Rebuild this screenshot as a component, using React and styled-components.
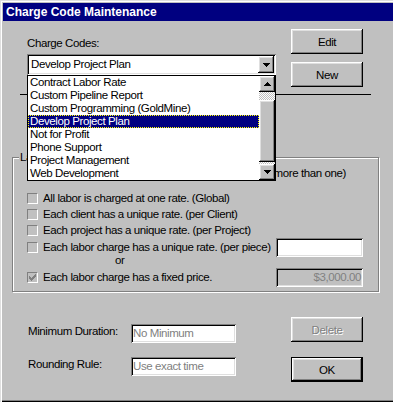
import styled, { createGlobalStyle } from "styled-components";

const GlobalStyle = createGlobalStyle`
  html, body {
    margin: 0;
    padding: 0;
    background: #c0c0c0;
  }
  body {
    font-family: "Liberation Sans", Arial, sans-serif;
    font-size: 11.5px;
    letter-spacing: -0.4px;
    color: #000;
  }
`;

const raised = `
  background: #c0c0c0;
  box-shadow: inset -1px -1px #000, inset 1px 1px #fff,
    inset -2px -2px #808080, inset 2px 2px #dfdfdf;
`;

const sunken = `
  box-shadow: inset 1px 1px #808080, inset -1px -1px #fff,
    inset 2px 2px #000, inset -2px -2px #dfdfdf;
`;

const Window = styled.div`
  width: 393px;
  height: 402px;
  box-sizing: border-box;
  padding: 3px 0 0 3px;
  background: #c0c0c0;
  box-shadow: inset 1px 1px #dfdfdf, inset 2px 2px #fff,
    inset 0 -1px #000, inset 0 -2px #808080;
  overflow: hidden;
`;

const TitleBar = styled.div`
  height: 18px;
  line-height: 18px;
  padding-left: 3px;
  background: #000080;
  color: #fff;
  font-size: 12px;
  font-weight: bold;
  letter-spacing: 0;
  white-space: nowrap;
`;

const Body = styled.div`
  padding: 8px 14px 0 9px;
`;

const TopRow = styled.div`
  display: flex;
  justify-content: space-between;
  padding: 0 16px 0 15px;
`;

const ComboColumn = styled.div`
  position: relative;
  width: 249px;
  padding-top: 8px;
`;

const Label = styled.div`
  line-height: 13px;
  white-space: nowrap;
`;

const ComboLabel = styled(Label)`
  margin-bottom: 4px;
`;

const Combo = styled.div`
  display: flex;
  align-items: center;
  height: 21px;
  box-sizing: border-box;
  padding: 2px;
  background: #fff;
  ${sunken}
`;

const ComboText = styled.div`
  flex: 1;
  padding-left: 2px;
  line-height: 17px;
  white-space: nowrap;
`;

const ArrowButton = styled.div`
  width: 16px;
  height: ${(p) => p.$h || 16}px;
  flex: none;
  display: flex;
  align-items: center;
  justify-content: center;
  ${raised}
`;

const DropList = styled.div`
  position: absolute;
  left: 0;
  top: 46px;
  width: 249px;
  height: 106px;
  box-sizing: border-box;
  border: 1px solid #000;
  background: #fff;
  display: flex;
  z-index: 10;
`;

const Items = styled.div`
  flex: 1;
  min-width: 0;
`;

const Item = styled.div`
  height: 13px;
  line-height: 13px;
  padding-left: 2px;
  white-space: nowrap;
  background: ${(p) => (p.$selected ? "#000080" : "transparent")};
  color: ${(p) => (p.$selected ? "#fff" : "#000")};
  outline: ${(p) => (p.$selected ? "1px dotted #ffff00" : "none")};
  outline-offset: -1px;
`;

const ScrollBar = styled.div`
  width: 16px;
  display: flex;
  flex-direction: column;
`;

const Track = styled.div`
  flex: 1;
  background: repeating-conic-gradient(#c0c0c0 0 25%, #fff 0 50%) 0 0 / 2px 2px;
`;

const Thumb = styled.div`
  margin-top: 8px;
  height: 62px;
  ${raised}
`;

const ButtonColumn = styled.div`
  display: flex;
  flex-direction: column;
  gap: ${(p) => p.$gap}px;
`;

const Button = styled.div`
  width: 72px;
  height: 25px;
  box-sizing: border-box;
  display: flex;
  align-items: center;
  justify-content: center;
  ${raised}
  border: ${(p) => (p.$default ? "1px solid #000" : "none")};
  color: ${(p) => (p.$disabled ? "#808080" : "#000")};
  text-shadow: ${(p) => (p.$disabled ? "1px 1px #fff" : "none")};
`;

const Divider = styled.div`
  height: 1px;
  margin: 7px 8px 0;
  background: #000;
`;

const Group = styled.fieldset`
  margin: 56px 0 0;
  padding: 3px 14px 4px;
  min-width: 0;
  border: 1px solid #808080;
  box-shadow: inset 1px 1px #fff, 1px 1px #fff;
`;

const Legend = styled.legend`
  margin-left: -8px;
  padding: 0 1px;
  line-height: 13px;
  background: #c0c0c0;
`;

const GroupNote = styled(Label)`
  text-align: right;
  padding-right: 18px;
  margin-bottom: 10px;
`;

const CheckRow = styled.div`
  display: grid;
  grid-template-columns: 249px 87px;
  align-items: center;
  height: ${(p) => p.$h}px;
`;

const CheckLabel = styled.div`
  display: flex;
  align-items: center;
  gap: 5px;
  line-height: 13px;
  white-space: nowrap;
`;

const Box = styled.div`
  width: 11px;
  height: 11px;
  box-sizing: border-box;
  flex: none;
  border-style: solid;
  border-width: 1px;
  border-color: #808080 #fff #fff #808080;
  display: flex;
  align-items: center;
  justify-content: center;
`;

const OrRow = styled.div`
  margin-top: -3px;
  height: 14px;
  line-height: 13px;
  padding-left: 88px;
`;

const TextBox = styled.div`
  width: ${(p) => p.$w}px;
  height: 19px;
  box-sizing: border-box;
  padding: 2px;
  line-height: 15px;
  white-space: nowrap;
  overflow: hidden;
  background: ${(p) => (p.$gray ? "#c0c0c0" : "#fff")};
  color: ${(p) => (p.$dim ? "#808080" : "#000")};
  text-align: ${(p) => (p.$right ? "right" : "left")};
  ${sunken}
`;

const BottomArea = styled.div`
  display: flex;
  justify-content: space-between;
  margin-top: 25px;
  padding: 0 16px;
`;

const FieldColumn = styled.div`
  display: flex;
  flex-direction: column;
  gap: 14px;
  padding-top: 7px;
`;

const FieldRow = styled.div`
  display: flex;
  align-items: flex-start;
`;

const FieldLabel = styled(Label)`
  width: 103px;
  padding-top: 1px;
`;

const Arrow = ({ up, color = "#000" }) => {
  const rows = up ? [1, 3, 5, 7] : [7, 5, 3, 1];
  return (
    <svg width="7" height="4" viewBox="0 0 7 4" shapeRendering="crispEdges">
      {rows.map((w, i) => (
        <rect key={i} x={(7 - w) / 2} y={i} width={w} height="1" fill={color} />
      ))}
    </svg>
  );
};

const CHECK = [
  "......#",
  ".....##",
  "#...###",
  "##.###.",
  "#####..",
  ".###...",
  "..#....",
];

const CheckMark = ({ color = "#808080" }) => (
  <svg width="7" height="7" viewBox="0 0 7 7" shapeRendering="crispEdges">
    {CHECK.flatMap((row, y) =>
      row.split("").map((c, x) =>
        c === "#" ? <rect key={`${x}-${y}`} x={x} y={y} width="1" height="1" fill={color} /> : null
      )
    )}
  </svg>
);

const codes = [
  "Contract Labor Rate",
  "Custom Pipeline Report",
  "Custom Programming (GoldMine)",
  "Develop Project Plan",
  "Not for Profit",
  "Phone Support",
  "Project Management",
  "Web Development",
];

const Check = ({ checked, children }) => (
  <CheckLabel>
    <Box>{checked && <CheckMark />}</Box>
    <span>{children}</span>
  </CheckLabel>
);

export default function App() {
  return (
    <>
      <GlobalStyle />
      <Window>
        <TitleBar>Charge Code Maintenance</TitleBar>
        <Body>
          <TopRow>
            <ComboColumn>
              <ComboLabel>Charge Codes:</ComboLabel>
              <Combo>
                <ComboText>Develop Project Plan</ComboText>
                <ArrowButton $h={17}>
                  <Arrow />
                </ArrowButton>
              </Combo>
              <DropList>
                <Items>
                  {codes.map((c) => (
                    <Item key={c} $selected={c === "Develop Project Plan"}>
                      {c}
                    </Item>
                  ))}
                </Items>
                <ScrollBar>
                  <ArrowButton>
                    <Arrow up />
                  </ArrowButton>
                  <Track>
                    <Thumb />
                  </Track>
                  <ArrowButton>
                    <Arrow />
                  </ArrowButton>
                </ScrollBar>
              </DropList>
            </ComboColumn>
            <ButtonColumn $gap={8}>
              <Button>Edit</Button>
              <Button>New</Button>
            </ButtonColumn>
          </TopRow>

          <Divider />

          <Group>
            <Legend>Labor</Legend>
            <GroupNote>How labor is charged (more than one)</GroupNote>
            <CheckRow $h={16}>
              <Check>All labor is charged at one rate. (Global)</Check>
            </CheckRow>
            <CheckRow $h={16}>
              <Check>Each client has a unique rate. (per Client)</Check>
            </CheckRow>
            <CheckRow $h={16}>
              <Check>Each project has a unique rate. (per Project)</Check>
            </CheckRow>
            <CheckRow $h={19}>
              <Check>Each labor charge has a unique rate. (per piece)</Check>
              <TextBox $w={87} />
            </CheckRow>
            <OrRow>or</OrRow>
            <CheckRow $h={19}>
              <Check checked>Each labor charge has a fixed price.</Check>
              <TextBox $w={87} $gray $dim $right>
                $3,000.00
              </TextBox>
            </CheckRow>
          </Group>

          <BottomArea>
            <FieldColumn>
              <FieldRow>
                <FieldLabel>Minimum Duration:</FieldLabel>
                <TextBox $w={105} $dim>
                  No Minimum
                </TextBox>
              </FieldRow>
              <FieldRow>
                <FieldLabel>Rounding Rule:</FieldLabel>
                <TextBox $w={105} $dim>
                  Use exact time
                </TextBox>
              </FieldRow>
            </FieldColumn>
            <ButtonColumn $gap={15}>
              <Button $disabled>Delete</Button>
              <Button $default>OK</Button>
            </ButtonColumn>
          </BottomArea>
        </Body>
      </Window>
    </>
  );
}
